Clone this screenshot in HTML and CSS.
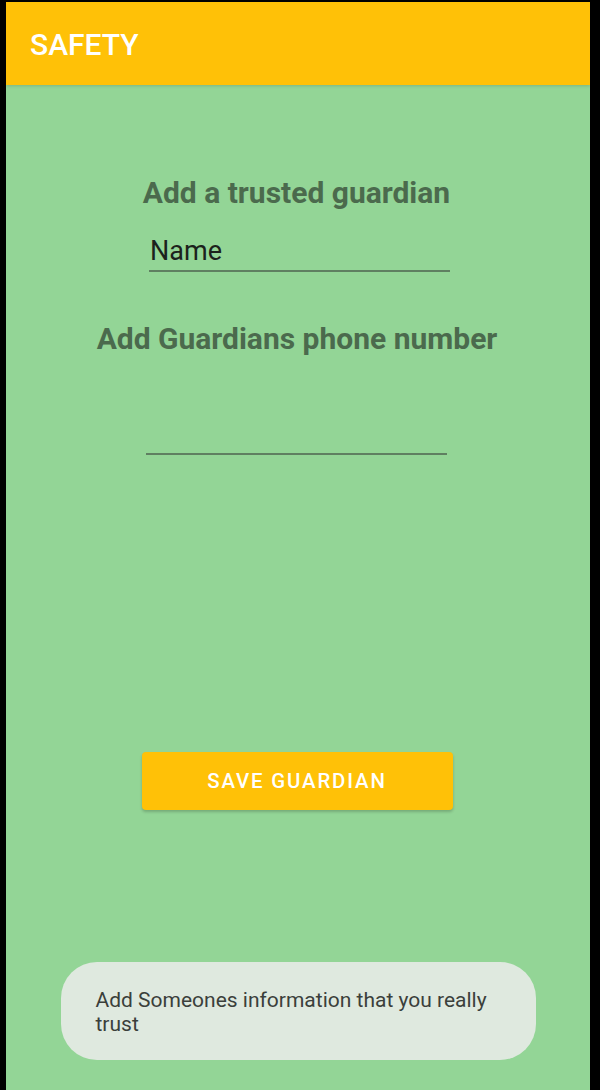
FILE: index.html
```html
<!DOCTYPE html>
<html>
<head>
<meta charset="utf-8">
<link rel="stylesheet" href="styles.css">
</head>
<body>
<div class="screen">
  <header class="appbar"><span class="appbar-title">SAFETY</span></header>
  <main class="content">
    <h2 class="label label-first">Add a trusted guardian</h2>
    <div class="field field-name"><span class="field-text">Name</span></div>
    <h2 class="label label-second">Add Guardians phone number</h2>
    <div class="field field-phone"></div>
    <button class="save-btn">SAVE GUARDIAN</button>
    <div class="toast">Add Someones information that you really trust</div>
  </main>
</div>
</body>
</html>
```

FILE: styles.css
```css
html, body {
  margin: 0;
  padding: 0;
  background: #000;
}
body {
  padding: 2px 0 0 6px;
  font-family: Roboto, "Liberation Sans", sans-serif;
}
.screen {
  width: 584px;
  height: 1088px;
  background: #93d596;
  display: flex;
  flex-direction: column;
}
.appbar {
  height: 83px;
  box-sizing: border-box;
  background: #ffc107;
  padding: 25px 0 0 24px;
  box-shadow: 0 1px 3px rgba(0,0,0,0.15);
}
.appbar-title {
  display: block;
  color: #fff;
  font-size: 30px;
  line-height: 35px;
  font-weight: 500;
}
.content {
  flex: 1;
  display: flex;
  flex-direction: column;
  align-items: center;
}
.label {
  margin: 0;
  font-size: 30px;
  line-height: 35px;
  font-weight: 700;
  color: #4b6a4d;
}
.label-first {
  margin-top: 90px;
  margin-right: 3px;
}
.label-second {
  margin-top: 49px;
  margin-right: 2px;
}
.field {
  width: 301px;
  border-bottom: 2px solid #5f7f61;
  box-sizing: border-box;
}
.field-name {
  margin-top: 25px;
  margin-left: 3px;
  height: 37px;
  padding: 0 0 3px 1px;
}
.field-text {
  display: block;
  font-size: 27px;
  line-height: 32px;
  color: #1c221c;
}
.field-phone {
  margin-top: 49px;
  margin-right: 4px;
  height: 50px;
}
.save-btn {
  margin-top: 297px;
  margin-right: 2px;
  width: 311px;
  height: 58px;
  border: none;
  border-radius: 4px;
  background: #ffc107;
  color: #fff;
  font-family: Roboto, "Liberation Sans", sans-serif;
  font-size: 20.4px;
  font-weight: 500;
  letter-spacing: 1.85px;
  box-shadow: 0 2px 3px rgba(0,0,0,0.2);
}
.toast {
  margin-top: 152px;
  width: 475px;
  height: 98px;
  box-sizing: border-box;
  border-radius: 36px;
  background: #dfe9df;
  padding: 25.5px 30px 0 35px;
  font-size: 21px;
  line-height: 24.7px;
  color: #3b3f3b;
}
```
